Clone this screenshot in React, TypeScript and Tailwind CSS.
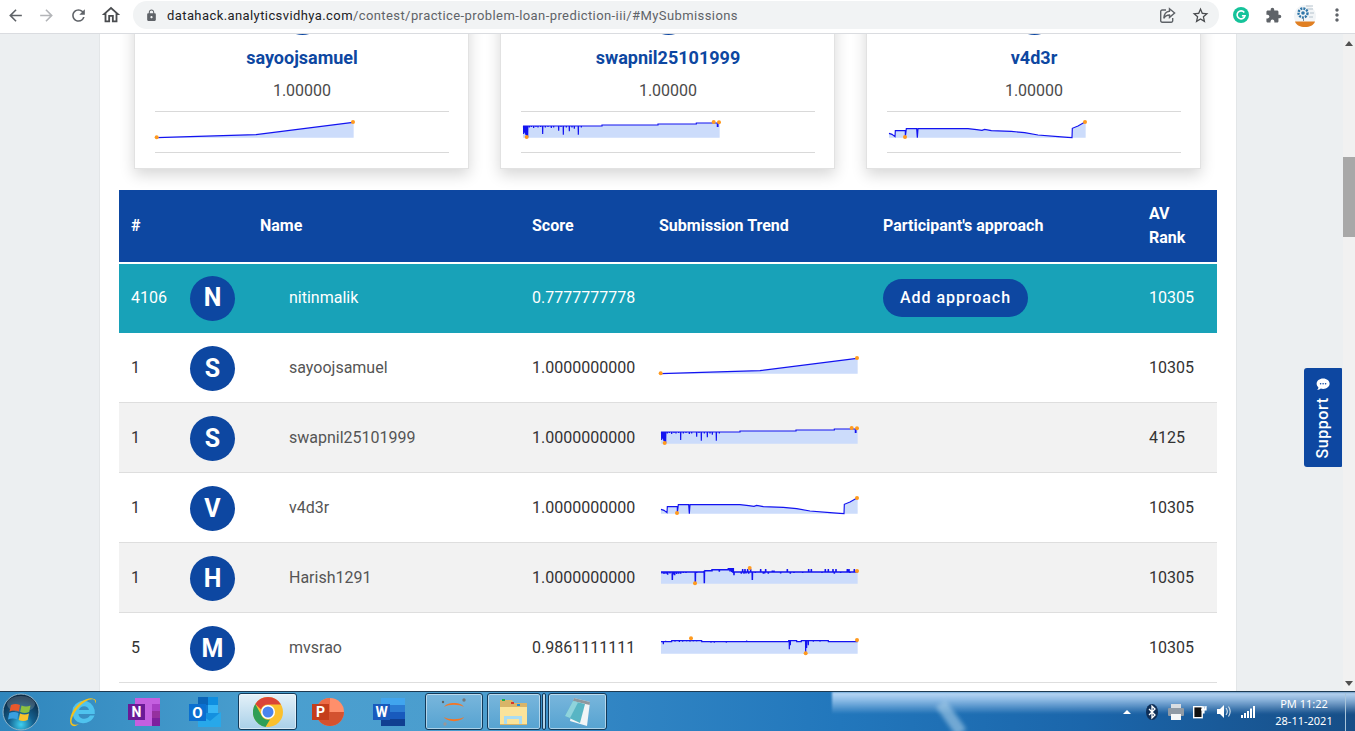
import type { ReactNode } from "react";
import {
  MdArrowBack,
  MdArrowForward,
  MdExtension,
  MdLock,
  MdMoreVert,
  MdOutlineHome,
  MdRefresh,
  MdStarBorder,
} from "react-icons/md";

type Pt = [number, number];

type Trend = {
  top: number;
  base: Pt[];
  spikes?: Pt[];
  dots: Pt[];
  weight?: number;
};

// Trend data is in 3x pixels, top is where the 66 unit high window starts
function buildLine(base: Pt[], spikes: Pt[] = []) {
  const yAt = (x: number) => {
    for (let i = 0; i < base.length - 1; i++) {
      if (x >= base[i][0] && x <= base[i + 1][0]) {
        const [x0, y0] = base[i];
        const [x1, y1] = base[i + 1];
        return x1 === x0 ? y1 : y0 + ((y1 - y0) * (x - x0)) / (x1 - x0);
      }
    }
    return base[base.length - 1][1];
  };
  const pts: Pt[] = [...base];
  spikes.forEach(([x, len]) => {
    const y = yAt(x);
    pts.push([x - 0.5, y], [x, y + len], [x + 0.5, y]);
  });
  return pts
    .map((p, i) => ({ p, i }))
    .sort((a, b) => a.p[0] - b.p[0] || a.i - b.i)
    .map(({ p }) => p);
}

const sayoojTrend: Trend = {
  top: 44,
  base: [[32, 100], [330, 91], [621, 54]],
  dots: [[32, 99], [621, 53]],
  weight: 3.5,
};

const swapnilTrend: Trend = {
  top: 254,
  base: [[33, 275], [270, 275], [270, 272], [438, 272], [438, 269], [553, 269], [553, 266], [616, 265], [616, 276], [618, 276], [618, 265], [623, 265]],
  spikes: [[35, 24], [38, 20], [41, 26], [44, 34], [47, 34], [52, 4], [58, 3], [65, 6], [72, 3], [78, 4], [86, 3], [92, 24], [100, 4], [108, 3], [118, 6], [125, 4], [140, 14], [147, 3], [154, 26], [163, 4], [172, 16], [180, 4], [187, 8], [199, 26], [208, 4]],
  dots: [[44, 308], [605, 263], [621, 264]],
  weight: 3.5,
};

const v4d3rTrend: Trend = {
  top: 464,
  base: [[33, 507], [42, 510], [51, 517], [52, 499], [82, 499], [82, 517], [85, 493], [116, 493], [118, 520], [120, 493], [270, 493], [296, 496], [312, 498], [320, 495], [340, 499], [400, 501], [440, 505], [480, 512], [540, 517], [570, 519], [582, 520], [583, 492], [600, 485], [621, 473]],
  dots: [[81, 518], [621, 473]],
  weight: 3.5,
};

const harishTrend: Trend = {
  top: 44,
  base: [[33, 65], [160, 65], [166, 61], [186, 61], [186, 58], [235, 58], [235, 55], [250, 55], [250, 65], [623, 65]],
  spikes: [[36, 4], [42, 6], [48, 5], [53, 8], [60, 4], [67, 24], [71, 7], [74, 10], [80, 6], [86, 5], [92, 5], [100, 3], [108, 3], [136, 33], [140, 3], [163, 36], [208, 6], [240, 8], [245, 10], [248, 12], [252, 10], [274, 5], [278, -9], [282, 5], [285, -9], [288, 4], [293, -9], [296, 5], [302, -9], [307, 24], [316, 3], [332, -9], [340, 5], [344, 4], [347, -9], [355, 5], [367, -4], [372, -4], [392, 4], [412, -9], [421, 5], [432, 3], [458, 3], [476, -9], [484, -9], [516, 3], [526, -9], [535, -9], [549, -9], [553, 5], [558, -9], [572, 3], [592, -9], [597, -9], [600, 3], [613, -9]],
  dots: [[135, 99], [299, 53], [621, 62]],
  weight: 4.5,
};

const mvsraoTrend: Trend = {
  top: 254,
  base: [[33, 274], [65, 274], [65, 271], [155, 271], [155, 274], [416, 274], [416, 271], [440, 271], [440, 274], [454, 274], [454, 271], [535, 271], [535, 274], [623, 274]],
  spikes: [[40, 8], [47, -2], [75, 3], [88, 4], [98, 3], [110, 2], [120, 3], [130, 2], [140, 2], [183, 3], [193, 3], [229, 3], [290, -3], [418, 26], [421, 14], [467, 36], [470, 22], [475, 14], [490, 3], [510, 3]],
  dots: [[123, 264], [467, 309], [621, 269]],
  weight: 3.5,
};

function Sparkline({ trend }: { trend: Trend }) {
  const line = buildLine(trend.base, trend.spikes);
  const baseLine = trend.base.map((p) => p.join(",")).join(" ");
  const bottom = trend.top + 56;
  return (
    <svg width="198" height="22" viewBox={`30 ${trend.top} 594 66`} className="block overflow-visible">
      <polygon points={`${trend.base[0][0]},${bottom} ${baseLine} 623,${trend.base[trend.base.length - 1][1]} 623,${bottom}`} fill="#ccdcfb" />
      <polyline points={line.map((p) => p.join(",")).join(" ")} fill="none" stroke="#1313f0" strokeWidth={trend.weight ?? 3} />
      {trend.dots.map(([x, y]) => (
        <circle key={x} cx={x} cy={y} r="6" fill="#ff9a1f" />
      ))}
    </svg>
  );
}

const topCards = [
  { name: "sayoojsamuel", trend: sayoojTrend },
  { name: "swapnil25101999", trend: swapnilTrend },
  { name: "v4d3r", trend: v4d3rTrend },
];

const rows = [
  { rank: "1", letter: "S", name: "sayoojsamuel", score: "1.0000000000", trend: sayoojTrend, av: "10305" },
  { rank: "1", letter: "S", name: "swapnil25101999", score: "1.0000000000", trend: swapnilTrend, av: "4125" },
  { rank: "1", letter: "V", name: "v4d3r", score: "1.0000000000", trend: v4d3rTrend, av: "10305" },
  { rank: "1", letter: "H", name: "Harish1291", score: "1.0000000000", trend: harishTrend, av: "10305" },
  { rank: "5", letter: "M", name: "mvsrao", score: "0.9861111111", trend: mvsraoTrend, av: "10305" },
];

function Avatar({ letter, className = "" }: { letter?: string; className?: string }) {
  return (
    <div className={`flex h-[45px] w-[45px] shrink-0 items-center justify-center rounded-full bg-[#0d47a1] text-[25px] font-bold text-white ${className}`}>
      {letter}
    </div>
  );
}

function TopCard({ name, trend }: { name: string; trend: Trend }) {
  return (
    <div className="flex h-[194px] w-[335px] flex-col items-center border border-[#e2e2e2] bg-white pt-[14px] pr-[19px] pl-5 shadow-[0_6px_14px_rgba(0,0,0,0.16)]">
      <Avatar />
      <div className="mt-[12px] h-[21px] text-[18px] leading-[21px] font-bold text-[#0d47a1]">{name}</div>
      <div className="mt-[12px] h-[21px] text-[16px] leading-[21px] text-[#4a4a4a]">1.00000</div>
      <div className="mt-[10px] h-[42px] w-full border-y border-[#d9d9d9] pt-[7px] pl-px">
        <Sparkline trend={trend} />
      </div>
    </div>
  );
}

function ShareIcon() {
  return (
    <svg width="17" height="17" viewBox="0 0 17 17" fill="none" stroke="#5f6368" strokeWidth="1.4">
      <path d="M7 3H3.2A1.5 1.5 0 0 0 1.7 4.5v9.3a1.5 1.5 0 0 0 1.5 1.5h9a1.5 1.5 0 0 0 1.5-1.5V11" />
      <path d="M10.5 1.8 15.6 6l-5.1 4.4V8C7.8 8 6 9 4.8 11.4 5 8 6.8 4.6 10.5 4.3Z" fill="#fff" />
    </svg>
  );
}

function GrammarlyIcon() {
  return (
    <svg width="16" height="16" viewBox="0 0 16 16">
      <circle cx="8" cy="8" r="8" fill="#15c39a" />
      <path d="M11.3 5.4A4 4 0 1 0 12 8.8H8.9" fill="none" stroke="#fff" strokeWidth="1.6" />
    </svg>
  );
}

function ProfileIcon() {
  return (
    <svg width="22" height="25" viewBox="0 0 22 25">
      <circle cx="11" cy="13" r="11" fill="#f2f5f7" />
      <path d="M12 3h7M13 6h6M16 10h4M15 14h4" stroke="#b5c2cc" strokeWidth="1" />
      <circle cx="9" cy="10" r="4.5" fill="none" stroke="#2f76a8" strokeWidth="2.4" strokeDasharray="2 1" />
      <circle cx="9" cy="10" r="1.8" fill="#2f76a8" />
      <path d="M9 15h1v3H9Z" fill="#7a8c99" />
      <path d="M1 18.500h20C19.500 22.500 16 24 11 24s-8.500-1.500-10-5.500Z" fill="#e07f22" />
    </svg>
  );
}

function ChromeBar() {
  return (
    <div className="flex h-[34px] shrink-0 items-start border-b border-[#dadce0] bg-white">
      <div className="flex h-[30px] w-[133px] shrink-0 items-center text-[#5f6368]">
        <MdArrowBack className="ml-[6px] shrink-0" size={19} />
        <MdArrowForward className="ml-[12px] shrink-0 text-[#b3b5b8]" size={19} />
        <MdRefresh className="ml-[13px] shrink-0" size={19} />
        <MdOutlineHome className="ml-[12px] shrink-0 text-[#4a4c4f]" size={22} />
      </div>
      <div className="mt-px flex h-[28px] w-[1086px] shrink-0 items-center rounded-full bg-[#f1f3f4] pr-[8px] pl-[12px]">
        <MdLock className="shrink-0 text-[#5f6368]" size={13} />
        <div className="mt-[2px] ml-[9px] flex-1 text-[13px] tracking-[0.41px] whitespace-nowrap text-[#5f6368]">
          <span className="text-[#202124]">datahack.analyticsvidhya.com</span>
          /contest/practice-problem-loan-prediction-iii/#MySubmissions
        </div>
        <ShareIcon />
        <MdStarBorder className="mr-px ml-[15px] shrink-0 text-[#4a4c4f]" size={19} />
      </div>
      <div className="flex h-[30px] flex-1 items-center">
        <div className="ml-[14px]">
          <GrammarlyIcon />
        </div>
        <MdExtension className="ml-[16px] shrink-0 text-[#5f6368]" size={17} />
        <div className="ml-[12px]">
          <ProfileIcon />
        </div>
        <MdMoreVert className="ml-[11px] shrink-0 text-[#5f6368]" size={20} />
      </div>
    </div>
  );
}

const tableCols = "grid grid-cols-[71px_70px_272px_127px_224px_266px_68px] items-center";

function LeaderTable() {
  return (
    <div className="mx-[19px] mt-[21px] text-[16px]">
      <div className={`${tableCols} h-[72px] bg-[#0d47a1] leading-[24px] font-bold text-white`}>
        <div className="pl-3">#</div>
        <div />
        <div>Name</div>
        <div>Score</div>
        <div>Submission Trend</div>
        <div>Participant's approach</div>
        <div className="w-[40px]">AV Rank</div>
      </div>
      <div className={`${tableCols} mt-[2px] h-[69px] bg-[#18a2b8] pb-px text-white`}>
        <div className="pl-3">4106</div>
        <Avatar letter="N" />
        <div className="pl-[29px]">nitinmalik</div>
        <div>0.7777777778</div>
        <div />
        <div>
          <div className="flex h-[38px] w-[145px] items-center justify-center rounded-full bg-[#0d47a1] font-medium tracking-[0.95px]">
            Add approach
          </div>
        </div>
        <div>10305</div>
      </div>
      {rows.map((row, i) => (
        <div
          key={row.name}
          className={`${tableCols} h-[70px] border-b border-[#dedede] ${i % 2 === 1 ? "bg-[#f2f2f2]" : "bg-white"}`}
        >
          <div className="pl-3 text-[#333333]">{row.rank}</div>
          <Avatar letter={row.letter} className="mt-[2px]" />
          <div className="pl-[29px] text-[#555555]">{row.name}</div>
          <div className="text-[#333333]">{row.score}</div>
          <div className="mb-[4px] pl-px">
            <Sparkline trend={row.trend} />
          </div>
          <div />
          <div className="text-[#333333]">{row.av}</div>
        </div>
      ))}
    </div>
  );
}

function Scrollbar() {
  return (
    <div className="flex w-[12px] shrink-0 flex-col items-center bg-[#f1f1f1]">
      <div className="mt-[7px] h-0 w-0 border-x-[4px] border-b-[5px] border-x-transparent border-b-[#505050]" />
      <div className="mt-[111px] h-[80px] w-full bg-[#a8a8a8]" />
      <div className="mt-auto mb-[5px] h-0 w-0 border-x-[4px] border-t-[5px] border-x-transparent border-t-[#505050]" />
    </div>
  );
}

function SupportTab() {
  return (
    <div className="absolute top-[334px] left-[1304px] flex h-[99px] w-[38px] items-center justify-center rounded-l-[3px] rounded-r-[1px] bg-[#0d47a1]">
      <div className="flex -rotate-90 items-center gap-[6px] text-[16px] font-medium tracking-[0.6px] whitespace-nowrap text-white">
        Support
        <svg width="14" height="13" viewBox="0 0 14 13" className="rotate-90">
          <path d="M7 .5C3.3.5.5 2.8.5 5.7c0 1.4.7 2.7 1.800 3.600-.1 1-.7 2-1.300 2.600 1.500-.1 2.800-.6 3.700-1.400.7.2 1.500.3 2.300.3 3.700 0 6.500-2.300 6.500-5.100S10.700.5 7 .5Z" fill="#fff" />
          <circle cx="4.5" cy="5.7" r=".8" fill="#0d47a1" />
          <circle cx="7" cy="5.7" r=".8" fill="#0d47a1" />
          <circle cx="9.5" cy="5.7" r=".8" fill="#0d47a1" />
        </svg>
      </div>
    </div>
  );
}

function StartOrb() {
  return (
    <svg width="38" height="38" viewBox="0 0 38 38">
      <defs>
        <radialGradient id="orb" cx="50%" cy="85%" r="75%">
          <stop offset="0" stopColor="#3fd0f0" />
          <stop offset="0.45" stopColor="#14608f" />
          <stop offset="1" stopColor="#0b2a45" />
        </radialGradient>
      </defs>
      <circle cx="19" cy="19" r="18" fill="url(#orb)" stroke="#8fb4c9" strokeWidth="1" />
      <ellipse cx="19" cy="11" rx="14" ry="8" fill="#fff" opacity="0.18" />
      <path d="M9 12c3-1.500 6-1.500 9 0l-1.200 6.500c-3-1.300-6-1.300-9.300 0Z" fill="#e8582c" />
      <path d="M19.500 12.500c3 1.300 6 1.300 9 0l-1.300 6.500c-3 1.200-6 1.200-9 0Z" fill="#8cc13f" />
      <path d="M7.200 20c3.200-1.300 6.300-1.300 9.300 0l-1.200 6.500c-3-1.300-6-1.300-9.300 0Z" fill="#3a9fe0" />
      <path d="M18 20.500c3 1.200 6 1.200 9 0l-1.300 6.500c-3 1.200-6 1.200-9 0Z" fill="#f8c22d" />
    </svg>
  );
}

function IeIcon() {
  return (
    <svg width="32" height="32" viewBox="0 0 32 32">
      <path d="M6 11.500a11.500 11.500 0 0 1 21.800 6.500H11.500c.3 5.500 8.500 6.500 11.500 1.500h4.500C24 29 10 30 6.500 21 5.500 18 5 15 6 11.500Zm6 2.500h10c-.5-5-9-5.200-10 0Z" fill="#4fc3ee" />
      <path d="M27 3C22 0 11 6 6 15 2 22 2 29 6 30c2 .5 4-.5 6-2-3 1-6 1-7-1-1.500-3 1.500-10 7-16 5-5.500 11-8.500 14.500-7.500 1.500.5 2 2 1.500 4 1.500-1.500 1.500-3.500-.5-4.500Z" fill="#f3c11d" />
    </svg>
  );
}

function OneNoteIcon() {
  return (
    <svg width="33" height="28" viewBox="0 0 33 28">
      <rect x="7" width="25" height="28" fill="#c45fe0" />
      <rect x="24" y="6" width="8" height="7" fill="#a83fc4" />
      <rect x="24" y="13" width="8" height="7" fill="#95309f" />
      <rect x="24" y="20" width="8" height="8" fill="#7d1f9e" />
      <rect y="6" width="17" height="16" fill="#6a1a96" />
      <text x="8.5" y="19" textAnchor="middle" fontFamily="Roboto, sans-serif" fontWeight="700" fontSize="14" fill="#fff">N</text>
    </svg>
  );
}

function OutlookIcon() {
  return (
    <svg width="33" height="30" viewBox="0 0 33 30">
      <rect x="9" width="20" height="16" fill="#0a64b8" />
      <rect x="19" y="0" width="10" height="8" fill="#0f8ee0" />
      <rect x="19" y="8" width="10" height="8" fill="#36b5f5" />
      <rect x="9" y="8" width="10" height="8" fill="#0f78d0" />
      <path d="M9 16 32 16V30H9Z" fill="#1490df" />
      <path d="M9 16 21 24 32 15V30H9Z" fill="#28a8ea" />
      <rect y="7" width="17" height="17" fill="#0a6fd0" />
      <text x="8.5" y="20.5" textAnchor="middle" fontFamily="Roboto, sans-serif" fontWeight="700" fontSize="15" fill="#fff">O</text>
    </svg>
  );
}

function ChromeIcon() {
  return (
    <svg width="30" height="30" viewBox="0 0 30 30">
      <circle cx="15" cy="15" r="15" fill="#fbc02d" />
      <path d="M15 0a15 15 0 0 1 13 7.500H15a7.500 7.500 0 0 0-7 5L2.300 7A15 15 0 0 1 15 0Z" fill="#db4437" />
      <path d="M2.300 7 8.800 19a7.500 7.500 0 0 0 8.200 3.500L12.500 30A15 15 0 0 1 2.300 7Z" fill="#2f9e57" />
      <circle cx="15" cy="15" r="7" fill="#fff" />
      <circle cx="15" cy="15" r="5.5" fill="#4a84ee" />
    </svg>
  );
}

function PowerPointIcon() {
  return (
    <svg width="32" height="28" viewBox="0 0 32 28">
      <circle cx="18" cy="14" r="14" fill="#ff8f6b" />
      <path d="M18 14H4a14 14 0 0 0 28 0Z" fill="#d35230" />
      <path d="M18 0a14 14 0 0 0-14 14h14Z" fill="#ed6c47" />
      <rect y="6" width="17" height="16" fill="#c43e1c" />
      <text x="8.5" y="19" textAnchor="middle" fontFamily="Roboto, sans-serif" fontWeight="700" fontSize="14" fill="#fff">P</text>
    </svg>
  );
}

function WordIcon() {
  return (
    <svg width="33" height="28" viewBox="0 0 33 28">
      <rect x="8" width="24" height="7" fill="#41a5ee" />
      <rect x="8" y="7" width="24" height="7" fill="#2b7cd3" />
      <rect x="8" y="14" width="24" height="7" fill="#185abd" />
      <rect x="8" y="21" width="24" height="7" fill="#103f91" />
      <rect y="6" width="17" height="16" fill="#185abd" />
      <text x="8.5" y="19" textAnchor="middle" fontFamily="Roboto, sans-serif" fontWeight="700" fontSize="14" fill="#fff">W</text>
    </svg>
  );
}

function JupyterIcon() {
  return (
    <svg width="30" height="32" viewBox="0 0 30 32">
      <path d="M5 11c3-5.500 17-5.500 20 0-5-3-15-3-20 0Z" fill="#f37626" />
      <path d="M5 21c3 5.500 17 5.500 20 0-5 3-15 3-20 0Z" fill="#f37626" />
      <circle cx="25" cy="4" r="1.7" fill="#767677" />
      <circle cx="4" cy="6" r="1.2" fill="#616262" />
      <circle cx="6" cy="28" r="1.7" fill="#989798" />
    </svg>
  );
}

function FolderIcon() {
  return (
    <svg width="30" height="30" viewBox="0 0 30 30">
      <path d="M1 3h12l2 3h13v22H1Z" fill="#d9b468" />
      <rect x="3" y="2" width="3" height="2" fill="#1bb14c" />
      <rect x="12" y="5" width="3" height="2" fill="#d6372b" />
      <rect x="18" y="7" width="3" height="2" fill="#1f8fe0" />
      <path d="M1 10h27v17H1Z" fill="#fbe39a" />
      <path d="M5 27V19h18v8h-3v-5H8v5Z" fill="#a9dcf2" />
    </svg>
  );
}

function NotepadIcon() {
  return (
    <svg width="32" height="32" viewBox="0 0 32 32">
      <path d="M12 2 28 6 25 30 8 25Z" fill="#f1f4f6" />
      <path d="M12 2 28 6 27.700 9 11 5Z" fill="#8e979d" />
      <path d="M11 5 23 8 18 27 3 20Z" fill="#58b5c4" />
      <path d="M11 5 16 6.500 8 22 3 20Z" fill="#8fd3dc" />
    </svg>
  );
}

function TaskButton({ active, className, children }: { active?: boolean; className: string; children?: ReactNode }) {
  return (
    <div
      className={`flex h-[37px] shrink-0 items-center justify-center rounded-[3px] border border-[#123a5a] shadow-[inset_0_0_0_1px_rgba(255,255,255,0.5)] ${active ? "bg-[linear-gradient(180deg,#e4f1f9,#a9d0e8)]" : "bg-[linear-gradient(180deg,#79b6dc,#56a3d1)]"} ${className}`}
    >
      {children}
    </div>
  );
}

function TaskSlot({ children }: { children: ReactNode }) {
  return <div className="flex h-[37px] w-[61.5px] shrink-0 items-center justify-center">{children}</div>;
}

function TrayIcons() {
  return (
    <div className="flex items-center text-white">
      <div className="h-0 w-0 border-x-[4px] border-b-[4px] border-x-transparent border-b-white" />
      <svg width="12" height="16" viewBox="0 0 12 16" className="ml-[15px]">
        <ellipse cx="6" cy="8" rx="6" ry="8" fill="#0f2f57" />
        <path d="M3 5 9 11 6 14V2L9 5 3 11" fill="none" stroke="#fff" strokeWidth="1.3" />
      </svg>
      <svg width="16" height="16" viewBox="0 0 16 16" className="ml-[10px]">
        <rect x="3" y="0" width="10" height="5" fill="#d8dde2" />
        <rect y="4" width="16" height="8" rx="1" fill="#8f9aa5" />
        <rect x="3" y="10" width="10" height="6" fill="#f5f7f8" />
      </svg>
      <svg width="14" height="15" viewBox="0 0 14 15" className="ml-[9px]">
        <rect x=".7" y="2.700" width="8.500" height="11" fill="#111" stroke="#fff" strokeWidth="1.4" />
        <path d="M8 6h3V2M13 2v4h-2v3H9" fill="#fff" stroke="#fff" strokeWidth="1.2" />
      </svg>
      <svg width="14" height="13" viewBox="0 0 14 13" className="ml-[10px]">
        <path d="M0 4h3l4-4v13L3 9H0Z" fill="#fff" />
        <path d="M9 3c1.500 2 1.500 5 0 7M11.500 1.500c2 3 2 7 0 10" fill="none" stroke="#d6e3ee" strokeWidth="1.1" />
      </svg>
      <svg width="15" height="12" viewBox="0 0 15 12" className="ml-[10px]">
        <rect y="9" width="2" height="3" fill="#fff" />
        <rect x="3" y="7" width="2" height="5" fill="#fff" />
        <rect x="6" y="5" width="2" height="7" fill="#fff" />
        <rect x="9" y="2.5" width="2" height="9.5" fill="#fff" />
        <rect x="12" y="0" width="2" height="12" fill="#fff" />
      </svg>
    </div>
  );
}

function Taskbar() {
  return (
    <div className="relative flex h-[40px] shrink-0 items-center overflow-hidden border-t border-[#1d3a52] bg-[linear-gradient(90deg,#2f86bd_0%,#4a9fcf_20%,#4b9dce_36%,#3286c4_44%,#2277bc_62%,#1b66ab_80%,#174e87_100%)]">
      <div className="absolute top-0 left-[832px] h-[22px] w-[530px] bg-[linear-gradient(180deg,rgba(200,225,250,0.95),rgba(190,220,250,0.7)_35%,rgba(150,190,230,0))] blur-[1px]" />
      <div className="absolute top-[8px] left-[945px] h-[36px] w-[12px] -rotate-[35deg] bg-[#a9cfe9] opacity-60 blur-[2px]" />
      <div className="relative flex w-[52px] shrink-0 justify-center pr-[11px]">
        <StartOrb />
      </div>
      <div className="relative flex items-center">
        <TaskSlot><IeIcon /></TaskSlot>
        <TaskSlot><OneNoteIcon /></TaskSlot>
        <TaskSlot><OutlookIcon /></TaskSlot>
        <TaskButton active className="ml-[1.5px] w-[59px]"><ChromeIcon /></TaskButton>
        <TaskSlot><PowerPointIcon /></TaskSlot>
        <TaskSlot><WordIcon /></TaskSlot>
        <TaskButton className="ml-[5px] w-[58px]"><JupyterIcon /></TaskButton>
        <TaskButton className="ml-[4px] w-[54px]"><FolderIcon /></TaskButton>
        <TaskButton className="ml-px w-[4px]" />
        <TaskButton className="ml-[2px] w-[59px]"><NotepadIcon /></TaskButton>
      </div>
      <div className="relative ml-auto flex items-center">
        <TrayIcons />
        <div className="ml-[13px] w-[70px] text-center font-['Noto_Sans',sans-serif] text-[11px] leading-[17px] text-white">
          <div>PM 11:22</div>
          <div>28-11-2021</div>
        </div>
        <div className="ml-[6px] h-[38px] w-[10px] border-l border-[#a8c4da]" />
      </div>
    </div>
  );
}

export default function App() {
  return (
    <div className="flex h-[731px] w-[1355px] flex-col overflow-hidden bg-white font-['Roboto',sans-serif]">
      <ChromeBar />
      <div className="relative flex min-h-0 flex-1">
        <div className="flex min-w-0 flex-1 overflow-hidden bg-[#eceff1]">
          <div className="ml-[99px] h-[800px] w-[1138px] shrink-0 border-x border-[#e3e6e8] bg-white">
            <div className="-mt-[59px] flex gap-[31px] pl-[34px]">
              {topCards.map((card) => (
                <TopCard key={card.name} name={card.name} trend={card.trend} />
              ))}
            </div>
            <LeaderTable />
          </div>
        </div>
        <Scrollbar />
        <SupportTab />
      </div>
      <Taskbar />
    </div>
  );
}
